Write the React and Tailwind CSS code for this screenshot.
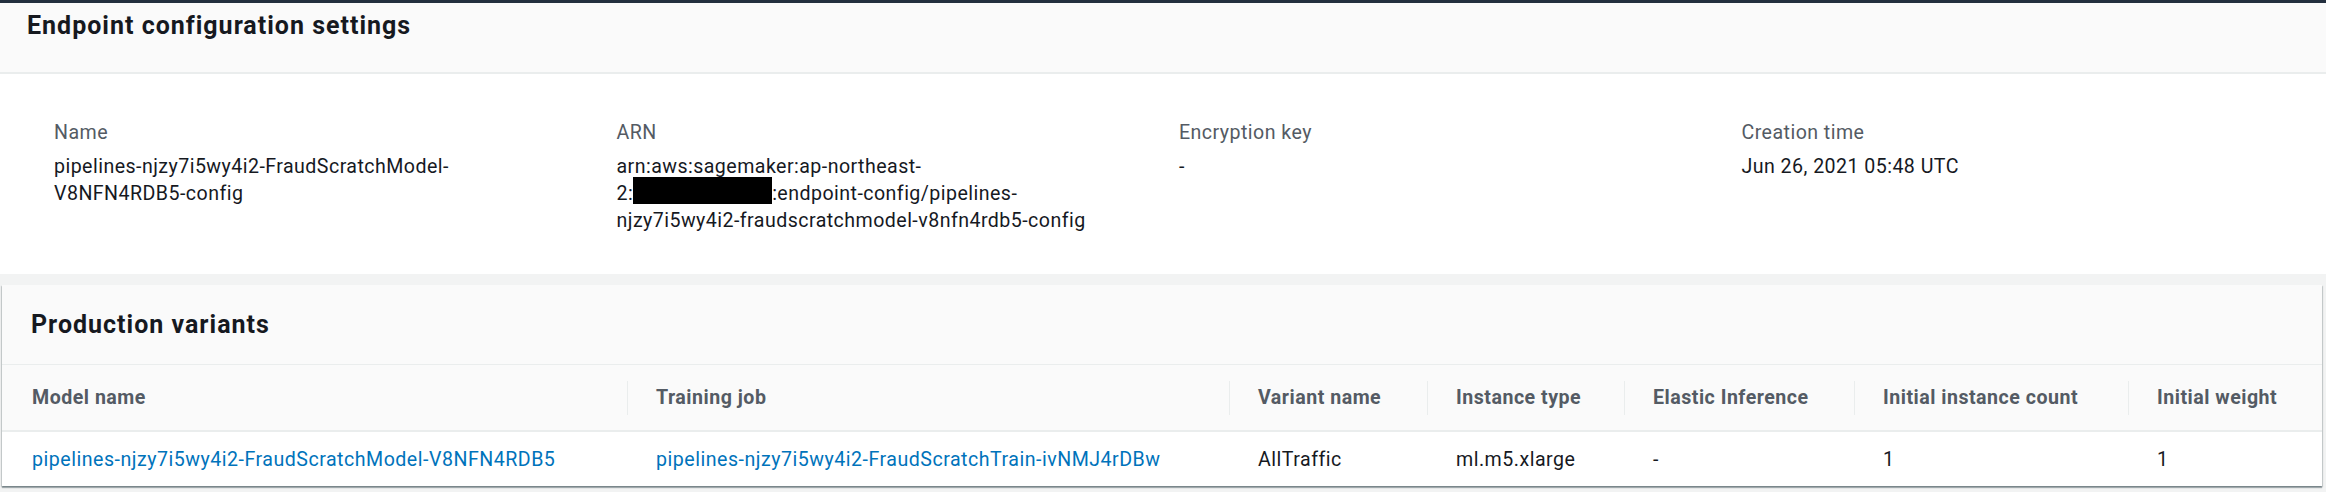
export default function App() {
  const font = "font-['Roboto','Liberation_Sans',sans-serif]";
  return (
    <div className={`${font} w-[2326px] h-[492px] bg-[#f2f3f3] text-[#16191f] overflow-hidden`}>
      <div className="h-[3px] bg-[#232f3e]" />
      {/* Panel 1 */}
      <div className="bg-white">
        <div className="h-[63px] bg-[#fafafa] pl-[27px] pt-[6px] border-b-2 border-[#eaeded] box-content">
          <h2 className="text-[25px] leading-[34px] font-bold tracking-[1px]">Endpoint configuration settings</h2>
        </div>
        <div className="h-[200px] pl-[54px] pr-[22px] pt-[45px] grid grid-cols-4 items-start text-[19.6px] leading-[27px] tracking-[0.45px]">
          <div className="pr-[28px]">
            <div className="text-[#545b64] mb-[7px]">Name</div>
            <div>
              pipelines-njzy7i5wy4i2-FraudScratchModel-
              <br />
              V8NFN4RDB5-config
            </div>
          </div>
          <div className="pr-[28px]">
            <div className="text-[#545b64] mb-[7px]">ARN</div>
            <div>
              arn:aws:sagemaker:ap-northeast-
              <br />
              2:
              <span className="inline-block w-[139px] h-[27px] -mt-[4px] align-[-4px] bg-black" />
              :endpoint-config/pipelines-
              <br />
              njzy7i5wy4i2-fraudscratchmodel-v8nfn4rdb5-config
            </div>
          </div>
          <div className="pr-[28px]">
            <div className="text-[#545b64] mb-[7px]">Encryption key</div>
            <div>-</div>
          </div>
          <div className="pr-[28px]">
            <div className="text-[#545b64] mb-[7px]">Creation time</div>
            <div>Jun 26, 2021 05:48 UTC</div>
          </div>
        </div>
      </div>
      {/* Panel 2 */}
      <div className="mt-[11px] ml-[2px] mr-[4px] bg-white shadow-[0_2px_1px_0_rgba(0,28,36,0.3),1px_1px_1px_0_rgba(0,28,36,0.15),-1px_1px_1px_0_rgba(0,28,36,0.15)]">
        <div className="h-[80px] bg-[#fafafa] border-b border-[#eaeded] flex items-center pl-[29px]">
          <h2 className="text-[25px] leading-[34px] font-bold tracking-[1px]">Production variants</h2>
        </div>
        <div className="grid grid-cols-[625px_602px_198px_197px_230px_274px_1fr] text-[19.6px] leading-[27px] tracking-[0.5px]">
          {[
            "Model name",
            "Training job",
            "Variant name",
            "Instance type",
            "Elastic Inference",
            "Initial instance count",
            "Initial weight",
          ].map((h, i) => (
            <div key={h} className="h-[67px] bg-[#fafafa] border-b-2 border-[#eaeded] flex items-center">
              {i === 0 ? (
                <span className="pl-[30px] font-bold text-[#545b64]">{h}</span>
              ) : (
                <>
                  <span className="w-[1px] h-[34px] bg-[#eaeded]" />
                  <span className="pl-[28px] font-bold text-[#545b64]">{h}</span>
                </>
              )}
            </div>
          ))}
          <div className="h-[54px] flex items-center pl-[30px] text-[#0073bb]">pipelines-njzy7i5wy4i2-FraudScratchModel-V8NFN4RDB5</div>
          <div className="h-[54px] flex items-center pl-[29px] text-[#0073bb]">pipelines-njzy7i5wy4i2-FraudScratchTrain-ivNMJ4rDBw</div>
          <div className="h-[54px] flex items-center pl-[29px]">AllTraffic</div>
          <div className="h-[54px] flex items-center pl-[29px]">ml.m5.xlarge</div>
          <div className="h-[54px] flex items-center pl-[29px]">-</div>
          <div className="h-[54px] flex items-center pl-[29px]">1</div>
          <div className="h-[54px] flex items-center pl-[29px]">1</div>
        </div>
      </div>
    </div>
  );
}
